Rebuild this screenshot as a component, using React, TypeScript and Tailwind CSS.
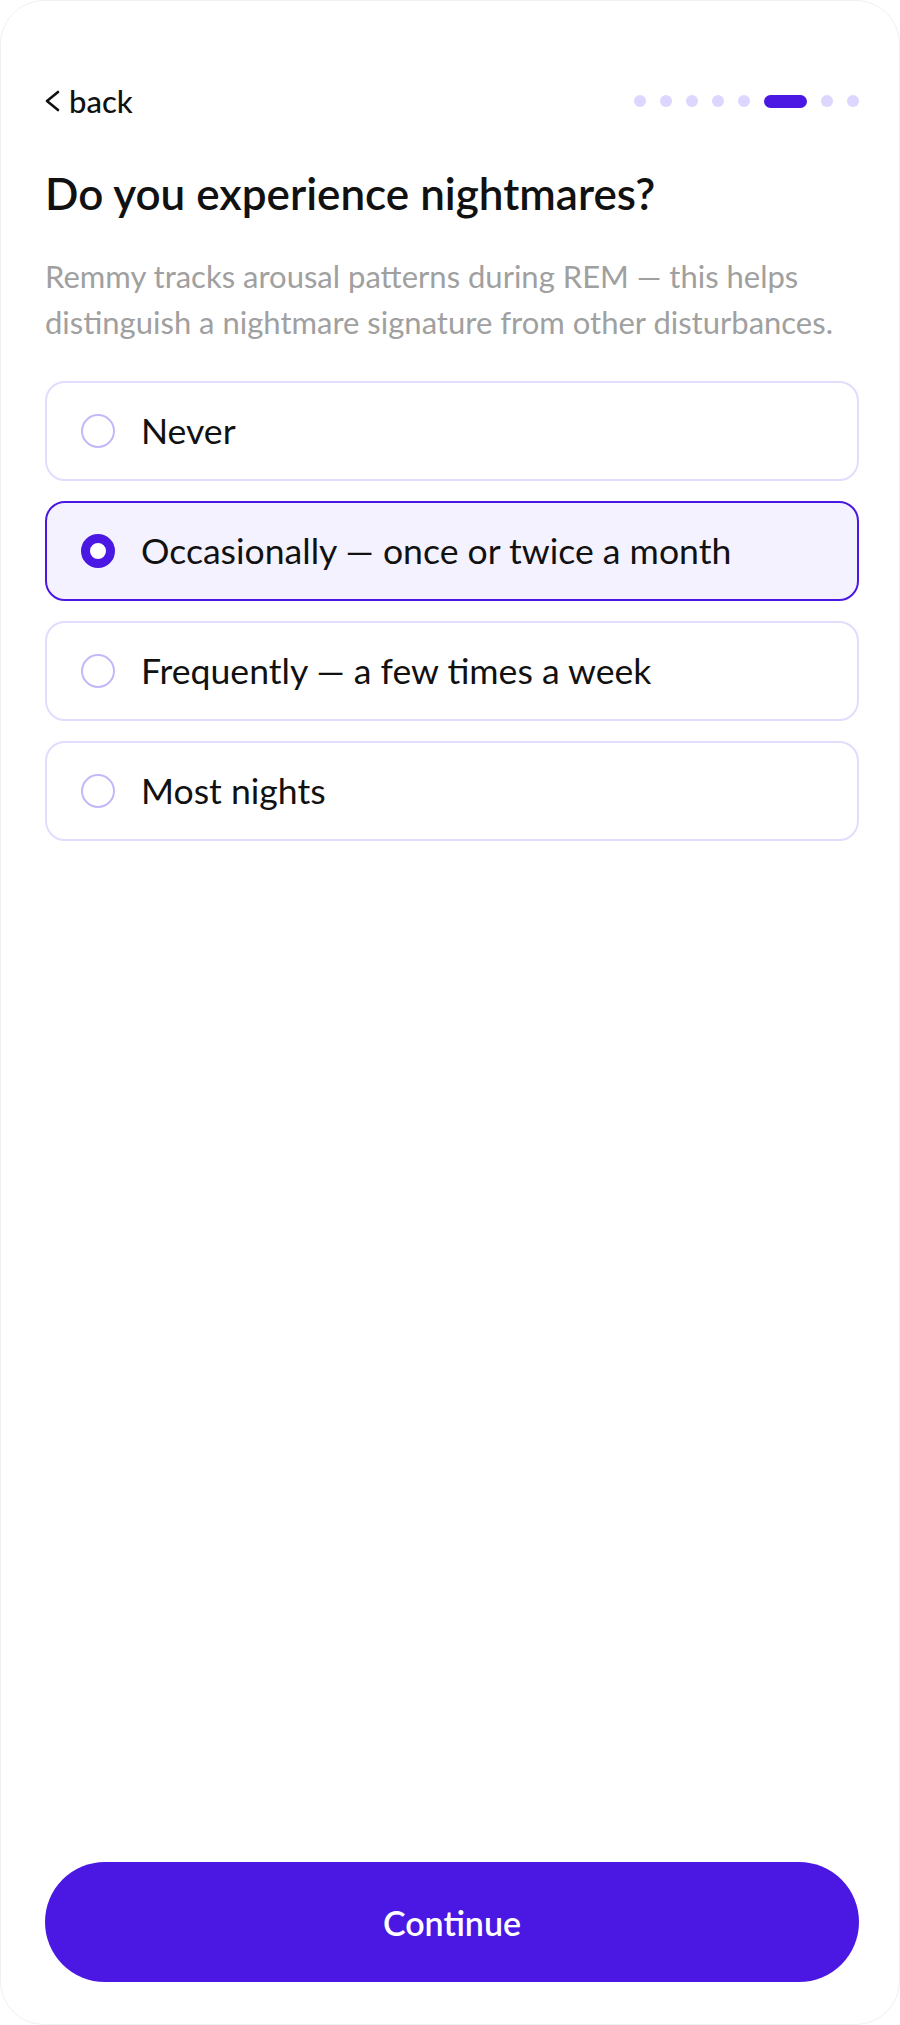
import React, { useState } from "react";

const options = [
  "Never",
  "Occasionally — once or twice a month",
  "Frequently — a few times a week",
  "Most nights",
];

const STEPS = 8;
const CURRENT = 5;

const App = () => {
  const [selected, setSelected] = useState(1);

  return (
    <main className="min-h-screen bg-white font-['Lato',sans-serif] text-[#111111]">
      <div className="flex min-h-screen flex-col rounded-[44px] border border-[#f0f0f0] bg-white pt-[85px] pr-[40px] pb-[42px] pl-[44px]">
        {/* top bar */}
        <div className="flex h-[30px] items-center justify-between">
          <button className="flex items-center gap-[9px] text-[31px] font-medium text-[#111111]">
            <svg
              className="h-[22px] w-[15px]"
              viewBox="0 0 15 22"
              fill="none"
              stroke="currentColor"
              strokeWidth={2.6}
            >
              <path strokeLinecap="round" strokeLinejoin="round" d="M13 2 L2 11 L13 20" />
            </svg>
            back
          </button>

          <div className="flex items-center gap-[14px]">
            {Array.from({ length: STEPS }).map((_, i) =>
              i === CURRENT ? (
                <div key={i} className="h-[13px] w-[43px] rounded-full bg-[#4a18e2]" />
              ) : (
                <div key={i} className="h-[12px] w-[12px] rounded-full bg-[#ddd6fe]" />
              )
            )}
          </div>
        </div>

        <h1 className="mt-[51px] text-[44px] leading-[52px] font-semibold text-[#111111]">
          Do you experience nightmares?
        </h1>

        <p className="mt-[34px] text-[31px] leading-[46px] text-[#a0a0a0]">
          Remmy tracks arousal patterns during REM — this helps distinguish a
          nightmare signature from other disturbances.
        </p>

        <div className="mt-[36px] flex flex-col gap-[20px]">
          {options.map((opt, i) => {
            const active = i === selected;
            return (
              <button
                key={opt}
                onClick={() => setSelected(i)}
                className={
                  active
                    ? "flex h-[100px] items-center gap-[26px] rounded-[20px] border-2 border-[#4a18e2] bg-[#f4f2fe] pl-[34px] text-left"
                    : "flex h-[100px] items-center gap-[26px] rounded-[20px] border-2 border-[#e2dcfd] bg-white pl-[34px] text-left"
                }
              >
                {active ? (
                  <span className="h-[34px] w-[34px] shrink-0 rounded-full border-[9px] border-[#4a18e2] bg-white" />
                ) : (
                  <span className="h-[34px] w-[34px] shrink-0 rounded-full border-2 border-[#c4b8f8] bg-white" />
                )}
                <span className="text-[35.6px] text-[#111111]">{opt}</span>
              </button>
            );
          })}
        </div>

        <div className="flex-1" />

        <button className="h-[120px] w-full rounded-full bg-[#4a18e2] text-[34px] font-semibold text-white">
          Continue
        </button>
      </div>
    </main>
  );
};

export default App;
